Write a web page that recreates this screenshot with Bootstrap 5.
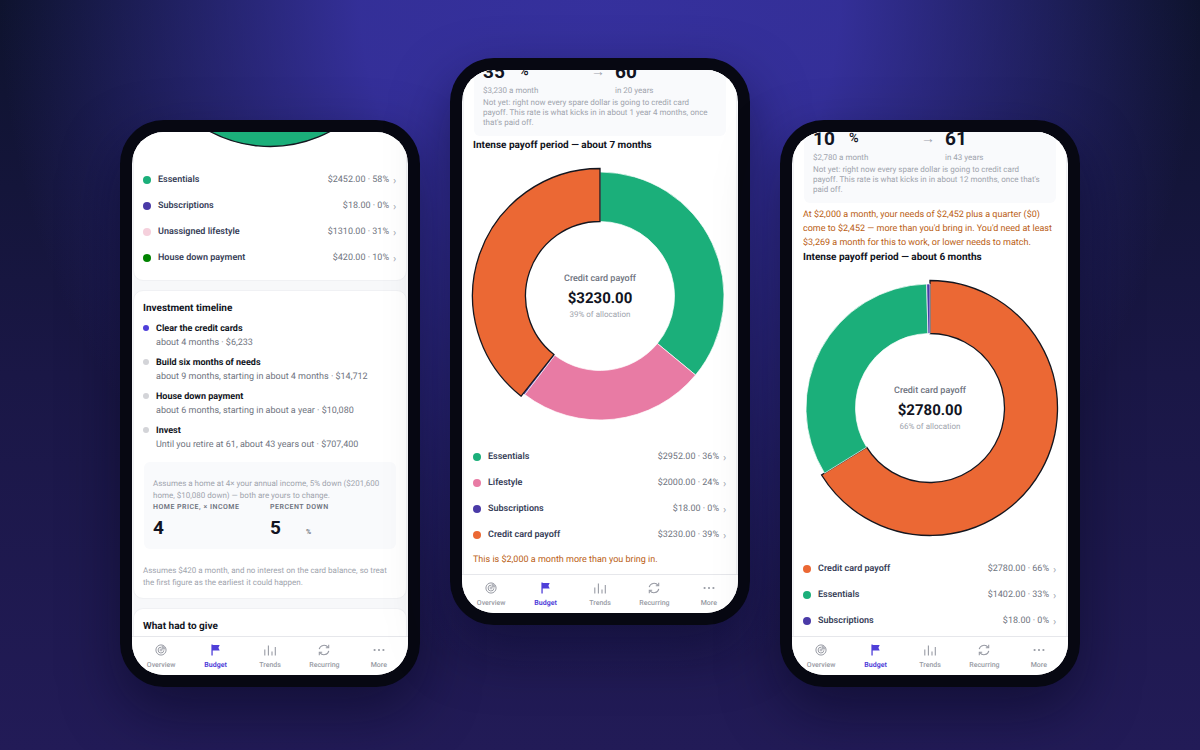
<!DOCTYPE html>
<html lang="en">
<head>
<meta charset="utf-8">
<meta name="viewport" content="width=device-width, initial-scale=1">
<title>Budget allocation</title>
<link href="https://cdn.jsdelivr.net/npm/bootstrap@5.3.0/dist/css/bootstrap.min.css" rel="stylesheet">
<style>
  :root { --ink: #111422; --label: #374058; --soft: #6f7480; --faint: #a0a4ad; --brand: #4f3fd9; --warn: #ba5e14; }
  body {
    font-family: Roboto, "Liberation Sans", sans-serif;
    text-rendering: geometricPrecision;
    font-size: 9px; line-height: 14px; color: var(--ink);
    background:
      radial-gradient(ellipse 50% 90% at 50% 0, rgba(61,54,178,.84) 0, rgba(61,54,178,.8) 40%, rgba(61,54,178,0) 100%),
      linear-gradient(180deg, #0e132e 0, #1a1746 50%, #221b57 100%);
  }
  .stage { padding-bottom: 5px; }
  .phones { width: 100%; max-width: 960px; display: grid; grid-template-columns: repeat(3, 1fr); gap: 30px; align-items: end; }
  .phone { aspect-ratio: 300 / 567; padding: 12px; border-radius: 44px; background: #070812; box-shadow: 0 24px 56px rgba(6,6,30,.5); }
  .phone-raised { margin-bottom: 62px; }
  .phone-screen { border-radius: 32px; background: #f7f8fa; }
  @media (max-width: 900px) { .phones { grid-template-columns: 300px; justify-content: center; } .phone-raised { margin-bottom: 0; } }

  .sheet { background: #fff; border: 1px solid #f0f1f4; border-radius: 10px; margin: 0 1px 9px; padding: 10px 9px 9px; }
  .sheet-cut { margin-bottom: 0; border-bottom: 0; border-radius: 10px 10px 0 0; padding-bottom: 2px; }
  .sheet-note { padding-bottom: 7px; }
  .heading { font-size: 10px; line-height: 15px; font-weight: 700; margin: 0; }
  .heading-spaced { margin-top: 2px; }

  .donut { margin: 13px -3px 18px; }
  .donut svg { display: block; width: 100%; }
  .donut-label { line-height: 13px; font-weight: 500; color: var(--soft); padding-top: 1px; }
  .donut-total { font-size: 15px; line-height: 20px; font-weight: 700; margin: 2px 0; }
  .donut-share { font-size: 8px; line-height: 10px; color: var(--faint); }

  .legend-row { height: 26px; line-height: 15px; color: var(--soft); text-decoration: none; }
  .legend-name { font-weight: 600; color: var(--label); margin-left: 6px; }
  .swatch { width: 8px; height: 8px; margin-right: 1px; }
  .chev { margin-left: 4px; width: 4px; font-size: 11px; color: var(--faint); }

  .panel { background: #f9fafc; border-radius: 6px; margin: 10px 1px 0; padding: 16px 9px 9px; color: var(--faint); font-size: 8px; line-height: 12px; }
  .panel-rate { line-height: 10px; padding-bottom: 8px; }
  .rate-col { width: 132px; }
  .rate-arrow { margin-right: 10px; font-size: 14px; }
  .rate-under { padding-top: 2px; }
  .rate-note { padding-top: 2px; max-width: 232px; }
  .field-col { width: 117px; }
  .field-label { font-size: 7px; line-height: 10px; font-weight: 600; letter-spacing: .5px; color: var(--soft); }
  .figure { font-size: 19px; line-height: 24px; font-weight: 700; color: var(--ink); width: 36px; border: 0; padding: 0; background: transparent; }
  .unit { font-size: 13px; font-weight: 500; color: var(--ink); }
  .warning { color: var(--warn); margin: 0; padding-top: 5px; }
  .footnote { font-size: 8px; line-height: 12px; color: var(--faint); }

  .steps { padding-top: 6px; }
  .step { gap: 7px; margin-bottom: 6px; color: var(--soft); }
  .step:last-child { margin-bottom: 0; }
  .step-dot { width: 6px; height: 6px; margin-top: 3px; background: #d3d4d8; }
  .step-dot-on { background: var(--brand); }
  .step-name { font-weight: 700; color: var(--ink); }

  .tabs { border-top: 1px solid #e6e7eb; background: #fff; padding: 7px 2px 4px; height: 39px; }
  .tab { flex: 1 1 0; color: #989ba4; font-size: 7px; line-height: 9px; font-weight: 500; text-decoration: none; gap: 5px; }
  .tab svg { width: 12px; height: 12px; }
  .tab-on { color: var(--brand); font-weight: 700; }
</style>
</head>
<body>
<svg class="d-none" aria-hidden="true">
  <symbol id="i-overview" viewBox="0 0 12 12"><g fill="none" stroke="currentColor"><circle cx="6" cy="6" r="5.1"/><path d="M6.2 3.2A2.9 2.9 0 1 0 8.9 6.3"/><circle cx="6" cy="6" r="1" stroke-width=".8"/></g><path d="M6.6 5.4V1.6A4.4 4.4 0 0 1 10.4 5.4z" fill="currentColor" opacity=".75"/></symbol>
  <symbol id="i-budget" viewBox="0 0 12 12"><path fill="currentColor" d="M1.4.4h1.3v.6h7L8.4 3.7l1.3 2.8h-7v5.1H1.4z"/></symbol>
  <symbol id="i-trends" viewBox="0 0 12 12"><path fill="none" stroke="currentColor" stroke-width="1.1" d="M.8 5.5v6M4.4 1.5v10M8 7.5v4M11.3 3v8.5"/></symbol>
  <symbol id="i-recurring" viewBox="0 0 12 12"><g fill="none" stroke="currentColor" stroke-width="1.1"><path d="M1.2 5.2A4.9 4.9 0 0 1 10 3.4M10.8 6.8A4.9 4.9 0 0 1 2 8.6"/><path d="M10.7.8v3H7.8M1.3 11.2v-3h2.9"/></g></symbol>
  <symbol id="i-more" viewBox="0 0 12 12"><g fill="currentColor"><circle cx="1.6" cy="6" r="1.1"/><circle cx="6" cy="6" r="1.1"/><circle cx="10.4" cy="6" r="1.1"/></g></symbol>
</svg>

<main class="stage min-vh-100 d-flex align-items-center justify-content-center">
  <div class="phones">

    <section class="phone">
      <div class="phone-screen h-100 overflow-hidden d-flex flex-column">
        <div class="flex-grow-1 overflow-hidden d-flex flex-column justify-content-end">
          <div class="flex-shrink-0">
            <div class="sheet">
              <div class="donut"><svg viewBox="-130 -130 260 260" data-selected="0" data-slices="2452 #1baf7a,18 #4a3aa7,1310 #f5d0dc,420 #008300"></svg></div>
              <a href="#" class="legend-row d-flex align-items-center"><span class="swatch rounded-circle" style="background:#1baf7a"></span><span class="legend-name me-auto">Essentials</span>$2452.00 · 58%<span class="chev">›</span></a>
              <a href="#" class="legend-row d-flex align-items-center"><span class="swatch rounded-circle" style="background:#4a3aa7"></span><span class="legend-name me-auto">Subscriptions</span>$18.00 · 0%<span class="chev">›</span></a>
              <a href="#" class="legend-row d-flex align-items-center"><span class="swatch rounded-circle" style="background:#f5d0dc"></span><span class="legend-name me-auto">Unassigned lifestyle</span>$1310.00 · 31%<span class="chev">›</span></a>
              <a href="#" class="legend-row d-flex align-items-center"><span class="swatch rounded-circle" style="background:#008300"></span><span class="legend-name me-auto">House down payment</span>$420.00 · 10%<span class="chev">›</span></a>
            </div>
            <div class="sheet">
              <h2 class="heading">Investment timeline</h2>
              <ol class="steps list-unstyled mb-0">
                <li class="step d-flex"><span class="step-dot step-dot-on rounded-circle"></span><div><div class="step-name">Clear the credit cards</div><div>about 4 months · $6,233</div></div></li>
                <li class="step d-flex"><span class="step-dot rounded-circle"></span><div><div class="step-name">Build six months of needs</div><div>about 9 months, starting in about 4 months · $14,712</div></div></li>
                <li class="step d-flex"><span class="step-dot rounded-circle"></span><div><div class="step-name">House down payment</div><div>about 6 months, starting in about a year · $10,080</div></div></li>
                <li class="step d-flex"><span class="step-dot rounded-circle"></span><div><div class="step-name">Invest</div><div>Until you retire at 61, about 43 years out · $707,400</div></div></li>
              </ol>
              <div class="panel">
                <div>Assumes a home at 4× your annual income, 5% down ($201,600 home, $10,080 down) — both are yours to change.</div>
                <div class="d-flex">
                  <div class="field-col"><label class="field-label d-block mb-1" for="price">HOME PRICE, × INCOME</label><input id="price" class="figure d-block" value="4"></div>
                  <div><label class="field-label d-block mb-1" for="down">PERCENT DOWN</label><div class="d-flex align-items-center"><input id="down" class="figure" value="5"><span class="field-label pt-2">%</span></div></div>
                </div>
              </div>
              <p class="footnote mb-0 pt-3">Assumes $420 a month, and no interest on the card balance, so treat the first figure as the earliest it could happen.</p>
            </div>
            <div class="sheet sheet-cut"><h2 class="heading">What had to give</h2></div>
          </div>
        </div>
        <nav class="tabs d-flex flex-shrink-0"></nav>
      </div>
    </section>

    <section class="phone phone-raised">
      <div class="phone-screen h-100 overflow-hidden d-flex flex-column">
        <div class="flex-grow-1 overflow-hidden d-flex flex-column justify-content-end">
          <div class="flex-shrink-0">
            <div class="sheet sheet-cut sheet-note">
              <div class="panel panel-rate">
                <div class="d-flex align-items-center">
                  <div class="rate-col d-flex align-items-center"><input class="figure" aria-label="Invest rate" value="35"><span class="unit">%</span><span class="rate-arrow ms-auto">→</span></div>
                  <output class="figure">60</output>
                </div>
                <div class="rate-under d-flex"><span class="rate-col">$3,230 a month</span><span>in 20 years</span></div>
                <div class="rate-note">Not yet: right now every spare dollar is going to credit card payoff. This rate is what kicks in in about 1 year 4 months, once that's paid off.</div>
              </div>
              <h2 class="heading heading-spaced">Intense payoff period — about 7 months</h2>
              <div class="donut position-relative"><svg viewBox="-130 -130 260 260" data-selected="3" data-slices="2952 #1baf7a,2000 #e87ba4,18 #4a3aa7,3230 #eb6834"></svg>
                <div class="position-absolute top-50 start-50 translate-middle text-center text-nowrap"><div class="donut-label">Credit card payoff</div><div class="donut-total">$3230.00</div><div class="donut-share">39% of allocation</div></div></div>
              <a href="#" class="legend-row d-flex align-items-center"><span class="swatch rounded-circle" style="background:#1baf7a"></span><span class="legend-name me-auto">Essentials</span>$2952.00 · 36%<span class="chev">›</span></a>
              <a href="#" class="legend-row d-flex align-items-center"><span class="swatch rounded-circle" style="background:#e87ba4"></span><span class="legend-name me-auto">Lifestyle</span>$2000.00 · 24%<span class="chev">›</span></a>
              <a href="#" class="legend-row d-flex align-items-center"><span class="swatch rounded-circle" style="background:#4a3aa7"></span><span class="legend-name me-auto">Subscriptions</span>$18.00 · 0%<span class="chev">›</span></a>
              <a href="#" class="legend-row d-flex align-items-center"><span class="swatch rounded-circle" style="background:#eb6834"></span><span class="legend-name me-auto">Credit card payoff</span>$3230.00 · 39%<span class="chev">›</span></a>
              <p class="warning">This is $2,000 a month more than you bring in.</p>
            </div>
          </div>
        </div>
        <nav class="tabs d-flex flex-shrink-0"></nav>
      </div>
    </section>

    <section class="phone">
      <div class="phone-screen h-100 overflow-hidden d-flex flex-column">
        <div class="flex-grow-1 overflow-hidden d-flex flex-column justify-content-end">
          <div class="flex-shrink-0">
            <div class="sheet sheet-cut">
              <div class="panel panel-rate">
                <div class="d-flex align-items-center">
                  <div class="rate-col d-flex align-items-center"><input class="figure" aria-label="Invest rate" value="10"><span class="unit">%</span><span class="rate-arrow ms-auto">→</span></div>
                  <output class="figure">61</output>
                </div>
                <div class="rate-under d-flex"><span class="rate-col">$2,780 a month</span><span>in 43 years</span></div>
                <div class="rate-note">Not yet: right now every spare dollar is going to credit card payoff. This rate is what kicks in in about 12 months, once that's paid off.</div>
              </div>
              <p class="warning">At $2,000 a month, your needs of $2,452 plus a quarter ($0) come to $2,452 — more than you'd bring in. You'd need at least $3,269 a month for this to work, or lower needs to match.</p>
              <h2 class="heading">Intense payoff period — about 6 months</h2>
              <div class="donut position-relative"><svg viewBox="-130 -130 260 260" data-selected="0" data-slices="2780 #eb6834,1402 #1baf7a,18 #4a3aa7"></svg>
                <div class="position-absolute top-50 start-50 translate-middle text-center text-nowrap"><div class="donut-label">Credit card payoff</div><div class="donut-total">$2780.00</div><div class="donut-share">66% of allocation</div></div></div>
              <a href="#" class="legend-row d-flex align-items-center"><span class="swatch rounded-circle" style="background:#eb6834"></span><span class="legend-name me-auto">Credit card payoff</span>$2780.00 · 66%<span class="chev">›</span></a>
              <a href="#" class="legend-row d-flex align-items-center"><span class="swatch rounded-circle" style="background:#1baf7a"></span><span class="legend-name me-auto">Essentials</span>$1402.00 · 33%<span class="chev">›</span></a>
              <a href="#" class="legend-row d-flex align-items-center"><span class="swatch rounded-circle" style="background:#4a3aa7"></span><span class="legend-name me-auto">Subscriptions</span>$18.00 · 0%<span class="chev">›</span></a>
            </div>
          </div>
        </div>
        <nav class="tabs d-flex flex-shrink-0"></nav>
      </div>
    </section>

  </div>
</main>
<script src="https://cdn.jsdelivr.net/npm/bootstrap@5.3.0/dist/js/bootstrap.bundle.min.js"></script>
<script>
  // The same tab bar closes every screen.
  const tabs = ['Overview', 'Budget', 'Trends', 'Recurring', 'More'];
  document.querySelectorAll('.tabs').forEach(nav => {
    nav.innerHTML = tabs.map(t =>
      `<a href="#" class="tab ${t === 'Budget' ? 'tab-on' : ''} d-flex flex-column align-items-center"><svg><use href="#i-${t.toLowerCase()}"/></svg><span>${t}</span></a>`).join('');
  });

  // Ring slices from amounts, clockwise from the top; the selected one is larger and outlined.
  document.querySelectorAll('svg[data-slices]').forEach(svg => {
    const slices = svg.dataset.slices.split(',').map(s => s.split(' '));
    const total = slices.reduce((n, s) => n + Number(s[0]), 0);
    const picked = Number(svg.dataset.selected);
    const point = (r, a) => `${(r * Math.sin(a)).toFixed(2)} ${(-r * Math.cos(a)).toFixed(2)}`;
    let start = 0, out = '';
    slices.forEach(([amount, color], i) => {
      const end = start + amount / total * 2 * Math.PI;
      const large = end - start > Math.PI ? 1 : 0;
      const on = i === picked, outer = on ? 127.5 : 124, inner = 74.5;
      out += `<path d="M${point(outer, start)}A${outer} ${outer} 0 ${large} 1 ${point(outer, end)}L${point(inner, end)}A${inner} ${inner} 0 ${large} 0 ${point(inner, start)}z" fill="${color}" stroke="${on ? '#14161f' : '#fff'}" stroke-width="${on ? 1.3 : .7}"/>`;
      start = end;
    });
    svg.innerHTML = out;
  });
</script>
</body>
</html>
